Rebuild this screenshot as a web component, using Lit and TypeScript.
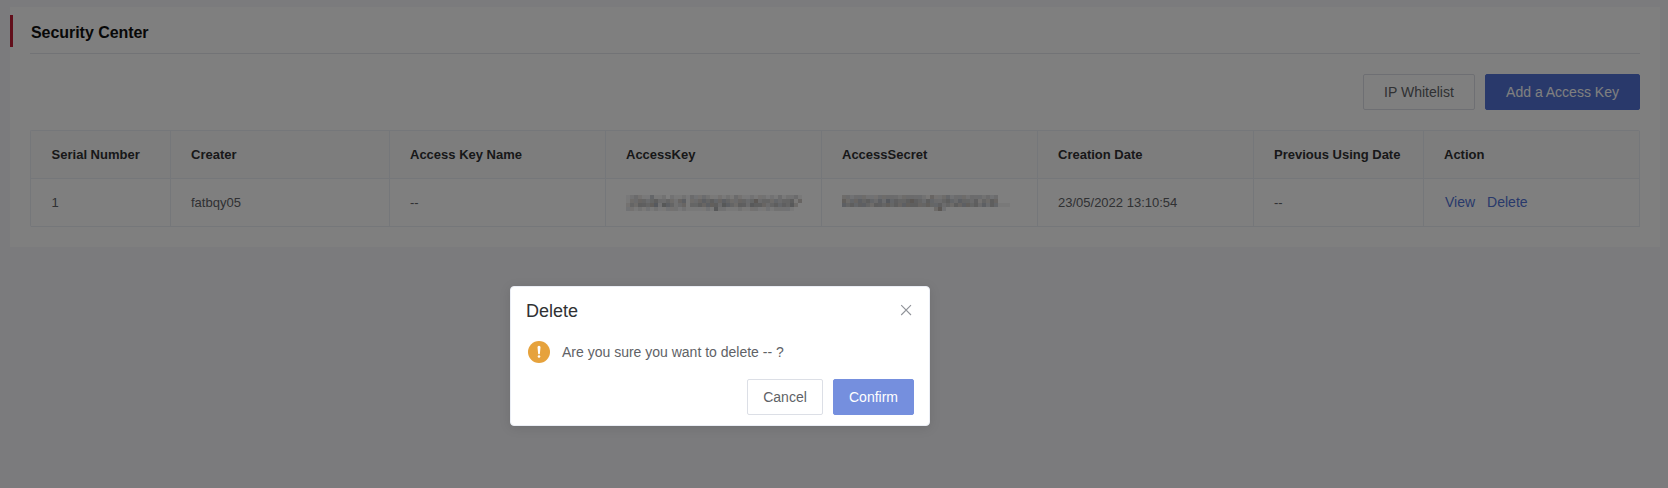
import { LitElement, html, svg, css } from "lit";
import { customElement, property } from "lit/decorators.js";

// Each digit is the darkness of one 4px block of a masked value.
const KEY_MOSAIC = [
  "12321141120211213223211212132112122121312231",
  "13344345334324513345454454334434634434344514",
  "24355456265423414454555365435536554345454630",
  "22121212112221211111216221112112211212222100",
];

const SECRET_MOSAIC = [
  "332333222333332333332142234233323332323000",
  "534454543536454456543543345435443524354000",
  "545455435545454555544544534354554535354111",
  "000000000000000000000003620000000000000000",
];

const TINTS = ["#303133", "#2a3850", "#303133", "#4a3424", "#34383c"];

@customElement("masked-value")
export class MaskedValue extends LitElement {
  @property({ attribute: false }) rows: string[] = [];

  static styles = css`
    :host {
      display: block;
      height: 16px;
    }
    svg {
      display: block;
    }
  `;

  private block(x: number, y: number, level: number) {
    return svg`<rect x=${x * 4} y=${y * 4} width="4" height="4"
      fill=${TINTS[(x * 7 + y * 3 + level) % TINTS.length]} fill-opacity=${level * 0.064}></rect>`;
  }

  render() {
    const width = (this.rows[0]?.length ?? 0) * 4;
    return html`<svg width=${width} height="16" viewBox="0 0 ${width} 16" shape-rendering="crispEdges">
      ${this.rows.map((row, y) => [...row].map((level, x) => this.block(x, y, Number(level))))}
    </svg>`;
  }
}

@customElement("app-root")
export class AppRoot extends LitElement {
  static styles = css`
    :host {
      display: block;
      position: relative;
      height: 488px;
      overflow: hidden;
      box-sizing: border-box;
      padding: 7px 8px 0 10px;
      background: #f7f7fb;
      font-family: "Liberation Sans", Arial, sans-serif;
      font-size: 14px;
      color: #606266;
    }
    * {
      box-sizing: border-box;
    }
    .card {
      height: 240px;
      background: #fff;
      padding: 8px 20px 20px 0;
    }
    .heading {
      display: flex;
      height: 39px;
    }
    .accent {
      width: 3px;
      height: 32px;
      margin-right: 17px;
      background: #c41e37;
    }
    .title {
      flex: 1;
      margin: 0;
      padding-left: 1px;
      border-bottom: 1px solid #e4e7ed;
      font-size: 16px;
      line-height: 35px;
      letter-spacing: -0.05px;
      color: #101010;
    }
    .toolbar {
      display: flex;
      justify-content: flex-end;
      gap: 10px;
      margin: 20px 0;
    }
    .button {
      height: 36px;
      padding: 0;
      border: 1px solid #dcdfe6;
      border-radius: 2px;
      background: #fff;
      color: #606266;
      font: 14px "Liberation Sans", Arial, sans-serif;
      text-align: center;
    }
    .primary {
      background: #5273d6;
      border-color: #5273d6;
      color: #fff;
    }
    .whitelist {
      width: 112px;
    }
    .add {
      width: 155px;
    }
    .table {
      margin-left: 20px;
      border: 1px solid #ebeef5;
      border-right: 0;
      border-bottom: 0;
      border-radius: 2px;
      font-size: 13px;
    }
    .row {
      display: grid;
      grid-template-columns: 140px 219px 216px 216px 216px 216px 170px 216px;
      height: 48px;
    }
    .cell {
      display: flex;
      align-items: center;
      padding-left: 20px;
      border-right: 1px solid #ebeef5;
      border-bottom: 1px solid #ebeef5;
      white-space: nowrap;
    }
    .cell:first-child {
      padding-left: 20.6px;
    }
    .head {
      background: #fafafa;
      color: #303133;
      font-weight: bold;
    }
    .actions {
      gap: 12px;
      padding: 0 0 2px 21px;
      font-size: 14px;
      color: #5273d6;
    }
    .overlay {
      position: absolute;
      inset: 0;
      display: flex;
      justify-content: center;
      align-items: flex-start;
      padding: 286px 228px 0 0;
      background: rgba(0, 0, 0, 0.5);
    }
    .dialog {
      width: 420px;
      height: 140px;
      padding: 15px;
      border: 1px solid #ebeef5;
      border-radius: 4px;
      background: #fff;
      box-shadow: 0 2px 12px rgba(0, 0, 0, 0.1);
    }
    .dialog-head {
      display: flex;
      justify-content: space-between;
      height: 18px;
      font-size: 18px;
      line-height: 18px;
      color: #303133;
    }
    .close {
      margin: 2px 2px 0 0;
    }
    .message {
      display: flex;
      align-items: center;
      gap: 12px;
      height: 24px;
      margin: 20px 0 15px 2px;
    }
    .dialog-foot {
      display: flex;
      justify-content: flex-end;
      gap: 10px;
    }
    .cancel {
      width: 76px;
    }
    .confirm {
      width: 81px;
      background: #758fde;
      border-color: #758fde;
    }
  `;

  private headers = [
    "Serial Number",
    "Creater",
    "Access Key Name",
    "AccessKey",
    "AccessSecret",
    "Creation Date",
    "Previous Using Date",
    "Action",
  ];

  render() {
    return html`
      <section class="card">
        <div class="heading">
          <div class="accent"></div>
          <h1 class="title">Security Center</h1>
        </div>
        <div class="toolbar">
          <button class="button whitelist">IP Whitelist</button>
          <button class="button primary add">Add a Access Key</button>
        </div>
        <div class="table">
          <div class="row head">${this.headers.map((h) => html`<div class="cell">${h}</div>`)}</div>
          <div class="row">
            <div class="cell">1</div>
            <div class="cell">fatbqy05</div>
            <div class="cell">--</div>
            <div class="cell"><masked-value .rows=${KEY_MOSAIC}></masked-value></div>
            <div class="cell"><masked-value .rows=${SECRET_MOSAIC}></masked-value></div>
            <div class="cell">23/05/2022 13:10:54</div>
            <div class="cell">--</div>
            <div class="cell actions"><span>View</span><span>Delete</span></div>
          </div>
        </div>
      </section>
      <div class="overlay">
        <div class="dialog" role="dialog">
          <div class="dialog-head">
            <span>Delete</span>
            <svg class="close" width="12" height="12" viewBox="0 0 12 12" fill="none" stroke="#909399" stroke-width="1.1">
              <path d="M1.2 1.2l9.8 9.8M11 1.2l-9.8 9.8" />
            </svg>
          </div>
          <div class="message">
            <svg width="22" height="22" viewBox="0 0 22 22">
              <circle cx="11" cy="11" r="11" fill="#e6a23c" />
              <path d="M9.5 6.2a1.5 1.5 0 0 1 3 0l-.6 6.2a.9.9 0 0 1-1.8 0z" fill="#fff" />
              <circle cx="11" cy="15.5" r="1.3" fill="#fff" />
            </svg>
            <span>Are you sure you want to delete -- ?</span>
          </div>
          <div class="dialog-foot">
            <button class="button cancel">Cancel</button>
            <button class="button primary confirm">Confirm</button>
          </div>
        </div>
      </div>
    `;
  }
}
